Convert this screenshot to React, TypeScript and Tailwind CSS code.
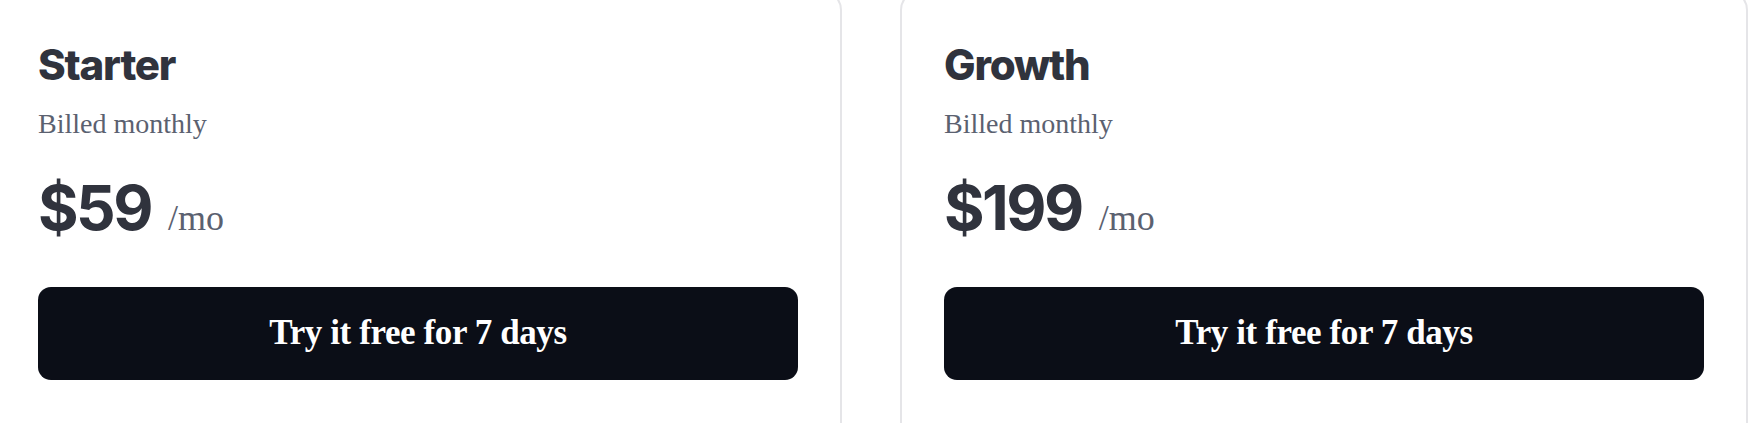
const plans = [
  { name: 'Starter', price: '$59' },
  { name: 'Growth', price: '$199' },
]

function PlanCard({ name, price }: { name: string; price: string }) {
  return (
    <div className="w-[848px] h-[470px] shrink-0 rounded-[20px] border-2 border-[#e5e5e8] bg-white px-[42px] pt-[52px]">
      <h3 className="font-['Inter',sans-serif] text-[42px] leading-none font-extrabold tracking-[-1.2px] text-[#30333d]">
        {name}
      </h3>
      <p className="mt-[21px] font-['Liberation_Serif',serif] text-[28px] leading-[1.2] text-[#5b6170]">
        Billed monthly
      </p>
      <div className="mt-[36px] flex items-baseline gap-[17px]">
        <span className="font-['Inter',sans-serif] text-[62px] leading-none font-bold tracking-[-2.5px] text-[#30333d]">
          {price}
        </span>
        <span className="font-['Liberation_Serif',serif] text-[36px] leading-none text-[#5b6170]">/mo</span>
      </div>
      <button className="mt-[48px] flex h-[93px] w-full items-center justify-center rounded-[13px] bg-[#0b0e17] font-['Liberation_Serif',serif] text-[35px] font-bold tracking-[-0.4px] text-white">
        Try it free for 7 days
      </button>
    </div>
  )
}

export default function App() {
  return (
    <div className="h-[423px] w-[1751px] overflow-hidden bg-white">
      <div className="-ml-[6px] -mt-[10px] flex gap-[58px]">
        {plans.map((p) => (
          <PlanCard key={p.name} name={p.name} price={p.price} />
        ))}
      </div>
    </div>
  )
}
